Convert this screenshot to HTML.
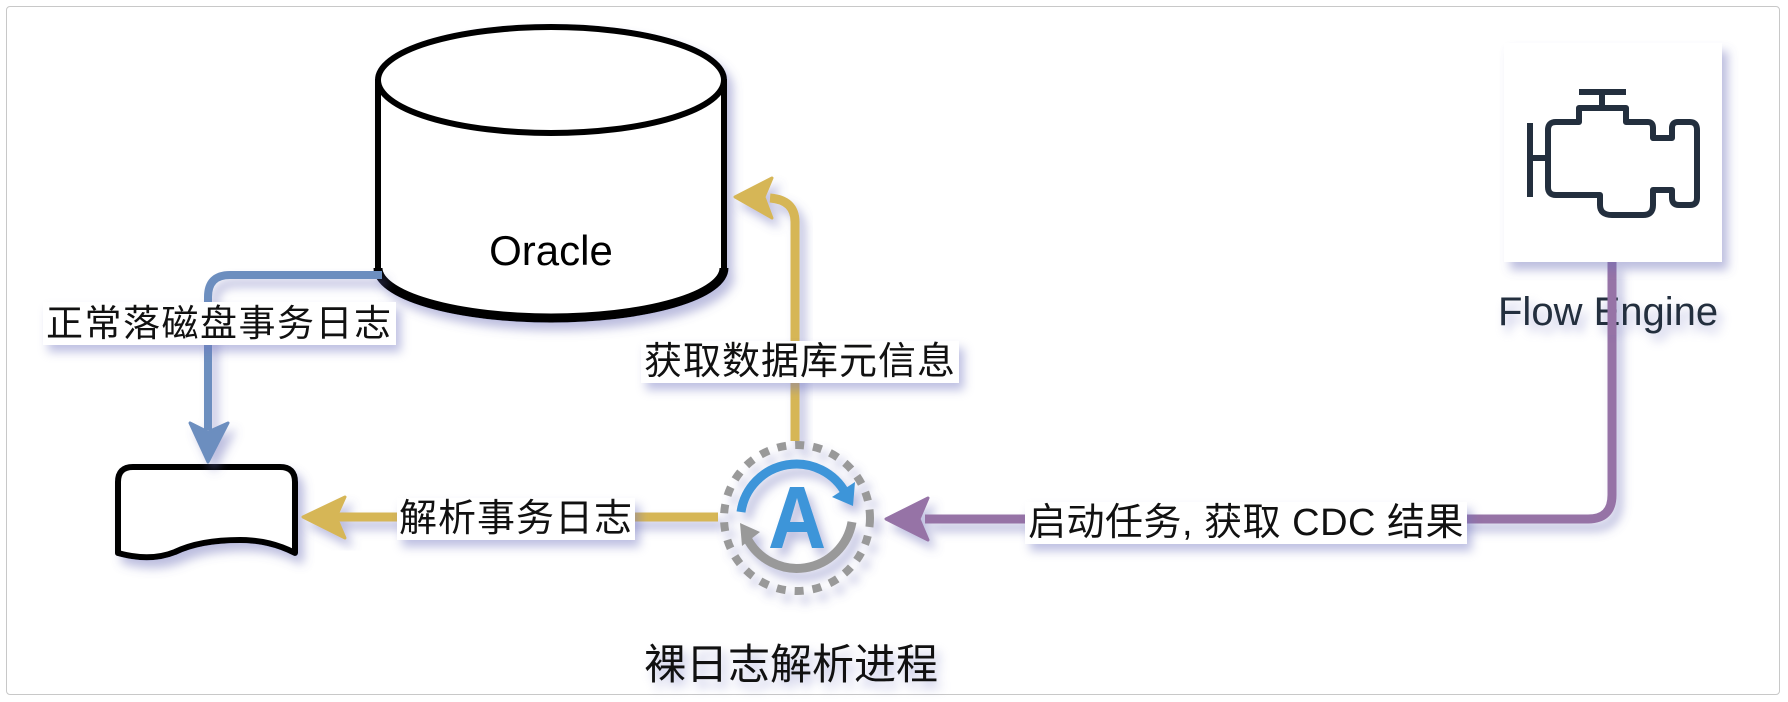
<!DOCTYPE html>
<html><head><meta charset="utf-8"><style>
html,body{margin:0;padding:0;background:#fff;}
body{width:1788px;height:702px;position:relative;overflow:hidden;font-family:"Liberation Sans","Noto Sans CJK SC",sans-serif;}
.frame{position:absolute;left:6px;top:6px;width:1774px;height:689px;border:1px solid #c8c8c8;border-radius:4px;box-sizing:border-box;}
.lbl{position:absolute;background:#fff;color:#111;white-space:nowrap;line-height:1;filter:drop-shadow(5px 7px 5px rgba(110,115,190,.45));}
</style></head><body>
<div class="frame"></div>
<svg width="1788" height="702" style="position:absolute;left:0;top:0">
<defs>
<filter id="sh" x="-20%" y="-20%" width="150%" height="150%"><feDropShadow dx="6" dy="8" stdDeviation="5" flood-color="#6a70b8" flood-opacity="0.45"/></filter>
</defs>
<g filter="url(#sh)">
<path d="M378 82 L378 268 A173 50 0 0 0 724 268 L724 82 Z" fill="#fff" stroke="#000" stroke-width="6"/>
<ellipse cx="551" cy="80" rx="173" ry="53" fill="#fff" stroke="#000" stroke-width="6"/>
<path d="M378 268 A173 50 0 0 0 724 268" fill="none" stroke="#000" stroke-width="9"/>
</g>
<text x="551" y="265" text-anchor="middle" font-family="Liberation Sans, sans-serif" font-size="42" fill="#000">Oracle</text>
<g filter="url(#sh)">
<path d="M118 553 L118 482 Q118 467 133 467 L280 467 Q295 467 295 482 L295 553 Q270 540 240 540 Q200 540 175 552 Q150 562 118 553 Z" fill="#fff" stroke="#000" stroke-width="6" stroke-linejoin="round"/>
</g>
<g filter="url(#sh)">
<path d="M382 275 L230 275 Q208 275 208 297 L208 430" fill="none" stroke="#6c8ebf" stroke-width="8"/>
<path d="M190 423 L208 462 L228 423 L208 432 Z" fill="#6c8ebf" stroke="#6c8ebf" stroke-width="3" stroke-linejoin="round"/>
</g>
<g filter="url(#sh)">
<path d="M718 517 L335 517" fill="none" stroke="#d6b656" stroke-width="9"/>
<path d="M345 497 L303 517 L345 538 L336 517 Z" fill="#d6b656" stroke="#d6b656" stroke-width="3" stroke-linejoin="round"/>
</g>
<g filter="url(#sh)">
<path d="M795 441 L795 222 Q795 200 770 198" fill="none" stroke="#d6b656" stroke-width="9"/>
<path d="M772 178 L735 197 L772 218 L764 197 Z" fill="#d6b656" stroke="#d6b656" stroke-width="3" stroke-linejoin="round"/>
</g>
<g filter="url(#sh)">
<path d="M1612 262 L1612 495 Q1612 519 1588 519 L925 519" fill="none" stroke="#9673a6" stroke-width="9"/>
<path d="M928 498 L886 519 L928 540 L919 519 Z" fill="#9673a6" stroke="#9673a6" stroke-width="3" stroke-linejoin="round"/>
</g>
<g filter="url(#sh)">
<rect x="1504" y="43" width="218" height="219" fill="#fff"/>
</g>
<g fill="none" stroke="#232f3e" stroke-width="6" stroke-linejoin="round">
<path d="M1579 92 L1626 92 M1602 92 L1602 108"/>
<path d="M1579 108 L1626 108 L1626 122 L1648 122 Q1653 122 1653 128 L1653 138 L1672 138 L1672 128 Q1672 122 1678 122 L1690 122 Q1697 122 1697 130 L1697 198 Q1697 205 1690 205 L1679 205 Q1672 205 1672 198 L1672 190 L1653 190 L1653 205 Q1653 215 1643 215 L1612 215 Q1600 215 1600 205 L1600 195 L1556 195 Q1548 195 1548 187 L1548 130 Q1548 122 1556 122 L1579 122 Z"/>
<path d="M1530 123 L1530 197 M1530 158 L1548 158"/>
</g>
<g filter="url(#sh)">
<circle cx="797" cy="518" r="73" fill="none" stroke="#999" stroke-width="8" stroke-dasharray="9 9"/>
<path d="M741 512 A56 56 0 0 1 846 494" fill="none" stroke="#3d95d9" stroke-width="9"/>
<path d="M832 497 L853 506 L855 482 Z" fill="#3d95d9"/>
<path d="M852 522 A56 56 0 0 1 747 538" fill="none" stroke="#999" stroke-width="9"/>
<path d="M740 523 L760 532 L742 546 Z" fill="#999"/>
<path d="M770 548 L790 487 L804 487 L824 548 L812 548 L807 532 L787 532 L782 548 Z M790 522 L804 522 L797 498 Z" fill="#3d95d9" fill-rule="evenodd"/>
</g>
</svg>
<div class="lbl" style="left:43px;top:302px;font-size:37px;padding:3px 3px;letter-spacing:1.5px;">正常落磁盘事务日志</div>
<div class="lbl" style="left:397px;top:498px;font-size:38px;padding:2px 2px;letter-spacing:1px;">解析事务日志</div>
<div class="lbl" style="left:641px;top:341px;font-size:38px;padding:2px 3px;letter-spacing:1px;">获取数据库元信息</div>
<div class="lbl" style="left:1025px;top:502px;font-size:38px;padding:2px 3px;letter-spacing:0.5px;">启动任务, 获取 CDC 结果</div>
<div class="lbl" style="left:644px;top:644px;font-size:42px;background:transparent;">裸日志解析进程</div>
<div class="lbl" style="left:1498px;top:292px;font-size:40px;color:#232f3e;background:transparent;">Flow Engine</div>
<svg width="1788" height="702" style="position:absolute;left:0;top:0;pointer-events:none"><path d="M1612 285 L1612 335" stroke="#9673a6" stroke-width="9"/></svg>
</body></html>
